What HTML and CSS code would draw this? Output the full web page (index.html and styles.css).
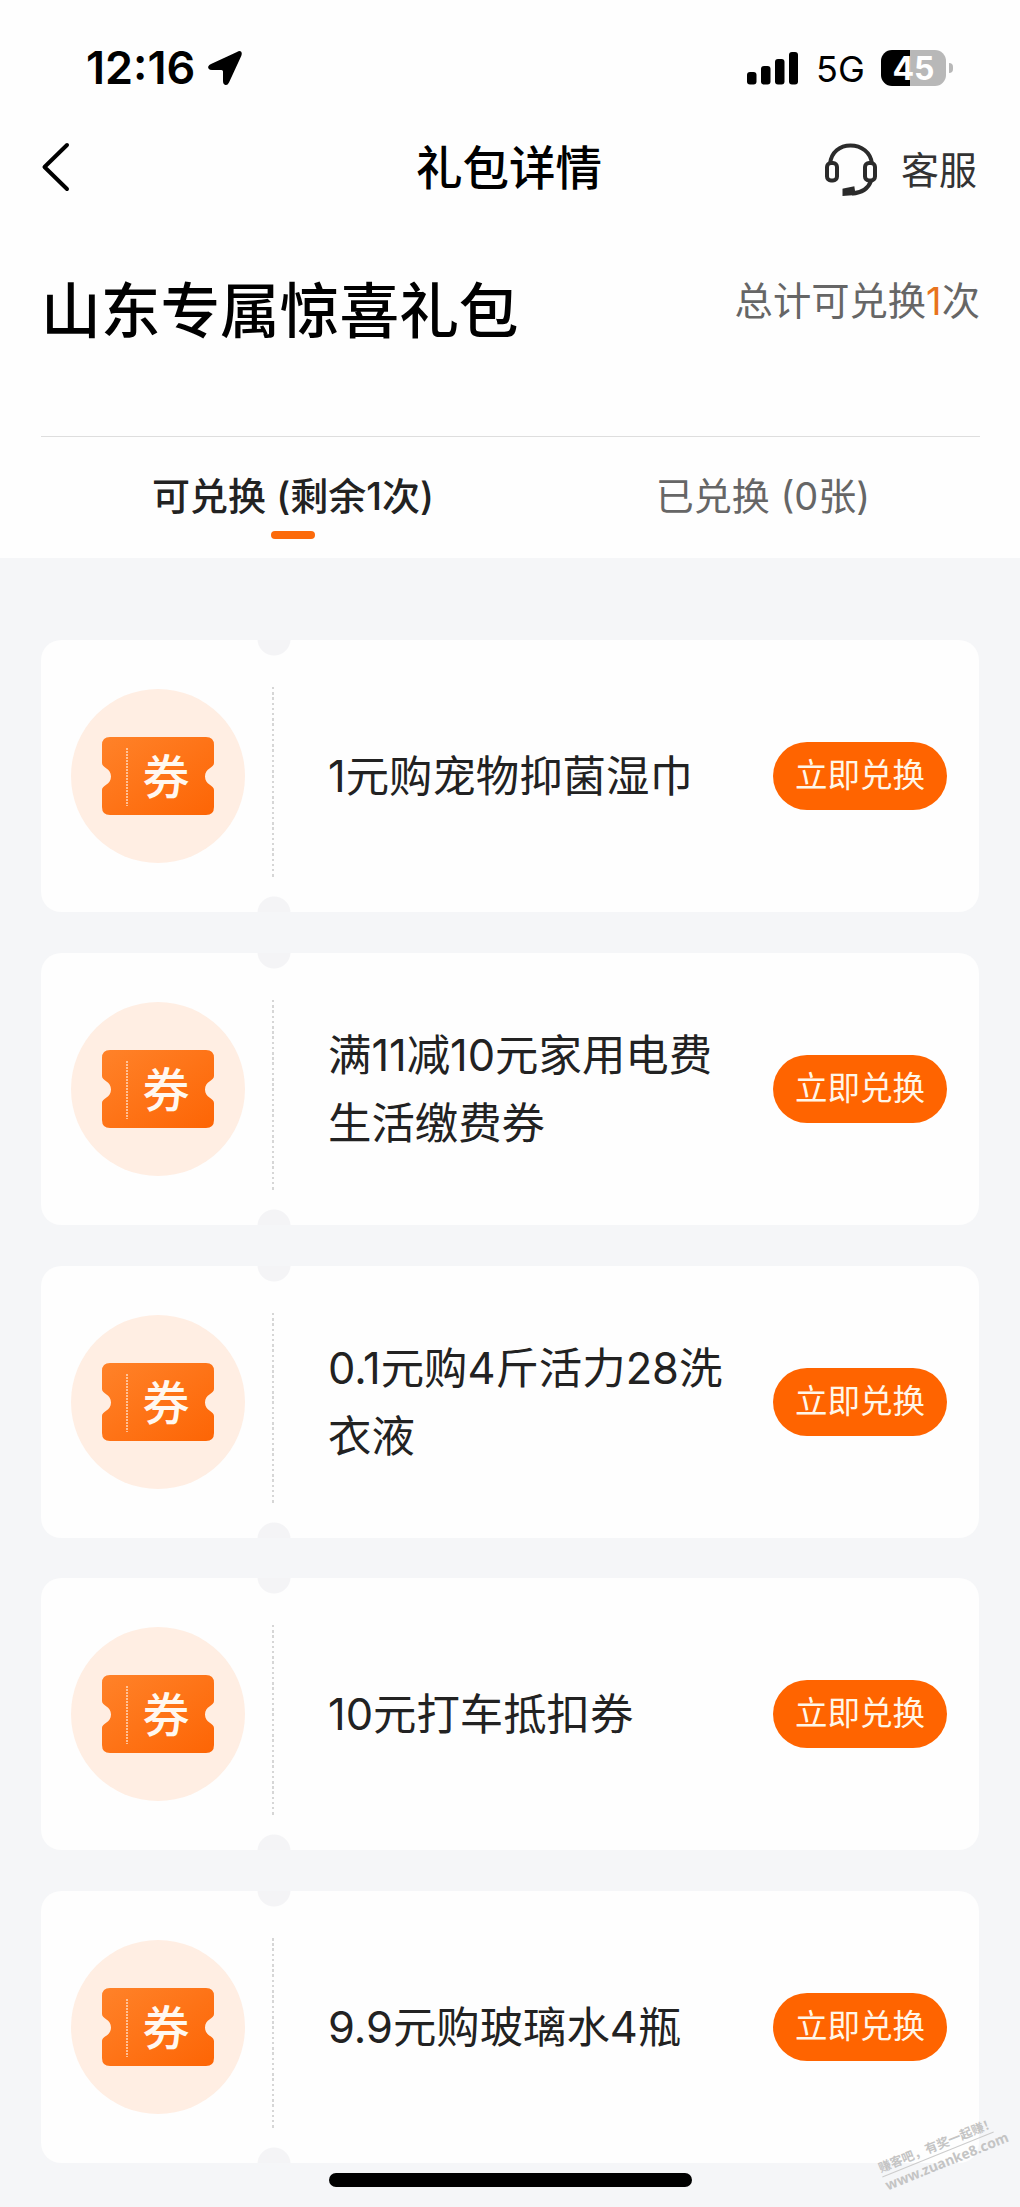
FILE: index.html
```html
<!DOCTYPE html>
<html lang="zh-CN">
<head>
<meta charset="utf-8">
<title>礼包详情</title>
<link rel="stylesheet" href="styles.css">
</head>
<body>
<svg class="defs" width="0" height="0" aria-hidden="true">
  <defs>
    <linearGradient id="ticket-fill" x1="0" y1="0" x2="1" y2="1">
      <stop offset="0" stop-color="#ff8229"/>
      <stop offset="1" stop-color="#fd6505"/>
    </linearGradient>
    <symbol id="coupon" viewBox="0 0 174 174">
      <circle cx="87" cy="87" r="87" fill="#ffeee3"/>
      <path d="M39 48H135Q143 48 143 56V74C143 79 134 79 134 87.500S143 96 143 101V118Q143 126 135 126H39Q31 126 31 118V101C31 96 40 96 40 87.500S31 79 31 74V56Q31 48 39 48Z" fill="url(#ticket-fill)"/>
      <path d="M56 59V117" stroke="#ffd9bd" stroke-width="1.500" stroke-dasharray="2 1"/>
      <text class="coupon-char" x="95" y="105" text-anchor="middle">券</text>
    </symbol>
  </defs>
</svg>

<header class="top">
  <div class="status">
    <div class="status-left">
      <span class="time">12:16</span>
      <svg width="36" height="36" viewBox="0 0 36 36"><path d="M30 2L4 14Q0 16 1.500 18.500Q2.500 20 5 20H14.500Q16 20 16 21.500V31Q16 34.500 18.500 35Q20.500 35.500 22 32.500L34 6.500Q35.500 3 34 1.500Q32.500 .5 30 2Z"/></svg>
    </div>
    <div class="status-right">
      <svg width="52" height="34" viewBox="0 0 52 34"><rect x="0" y="21" width="9.500" height="12.500" rx="3"/><rect x="14" y="15" width="9.500" height="18.500" rx="3"/><rect x="28" y="8" width="9.500" height="25.500" rx="3"/><rect x="42" y="1" width="9" height="32.500" rx="3"/></svg>
      <span class="network">5G</span>
      <div class="battery"><div class="battery-body">45</div><div class="battery-cap"></div></div>
    </div>
  </div>

  <nav class="nav">
    <svg class="back" width="30" height="52" viewBox="0 0 30 52"><path d="M26 4L3.500 26L26 48"/></svg>
    <h1 class="nav-title">礼包详情</h1>
    <div class="service">
      <svg width="52" height="54" viewBox="0 0 52 54"><path d="M5 21C6 9 15 2.500 25.500 2.500S46 9 47 21"/><rect x="2" y="20" width="10" height="17.500" rx="4"/><rect x="40" y="20" width="10" height="17.500" rx="4"/><path d="M46 38C43 46 36 50 27 50.500"/><path class="mic" d="M18.500 46.500L28.500 44.500L29.500 51L18.500 52Z"/></svg>
      <span>客服</span>
    </div>
  </nav>

  <section class="summary">
    <h2 class="summary-title">山东专属惊喜礼包</h2>
    <p class="summary-total">总计可兑换<em>1</em>次</p>
  </section>

  <div class="tabs">
    <div class="tab tab-active">可兑换 (剩余1次)</div>
    <div class="tab">已兑换 (0张)</div>
  </div>
</header>

<main class="list">
  <article class="card">
    <svg class="coupon"><use href="#coupon"/></svg>
    <div class="divider"></div>
    <p class="name">1元购宠物抑菌湿巾</p>
    <button class="redeem">立即兑换</button>
  </article>
  <article class="card">
    <svg class="coupon"><use href="#coupon"/></svg>
    <div class="divider"></div>
    <p class="name">满11减10元家用电费<br>生活缴费券</p>
    <button class="redeem">立即兑换</button>
  </article>
  <article class="card">
    <svg class="coupon"><use href="#coupon"/></svg>
    <div class="divider"></div>
    <p class="name">0.1元购4斤活力28洗<br>衣液</p>
    <button class="redeem">立即兑换</button>
  </article>
  <article class="card">
    <svg class="coupon"><use href="#coupon"/></svg>
    <div class="divider"></div>
    <p class="name">10元打车抵扣券</p>
    <button class="redeem">立即兑换</button>
  </article>
  <article class="card">
    <svg class="coupon"><use href="#coupon"/></svg>
    <div class="divider"></div>
    <p class="name">9.9元购玻璃水4瓶</p>
    <button class="redeem">立即兑换</button>
  </article>
</main>

<div class="home-bar"></div>
<div class="watermark">
  <div class="watermark-slogan">赚客吧，有奖一起赚！</div>
  <div class="watermark-site">www.zuanke8.com</div>
</div>
</body>
</html>
```
FILE: styles.css
```css
* { box-sizing: border-box; margin: 0; padding: 0; }

body {
  position: relative;
  width: 1020px;
  height: 2207px;
  overflow: hidden;
  background: #f5f6f8;
  color: #222;
  font-family: Inter, "Noto Sans CJK SC", sans-serif;
}

svg { display: block; flex: none; }
.defs { position: absolute; }

.top { height: 558px; background: #fefefe; }

/* Status bar */
.status {
  display: flex;
  justify-content: space-between;
  height: 136px;
  padding: 0 67px 0 86px;
  align-items: center;
  color: #000;
}
.status-left, .status-right { display: flex; align-items: center; }
.status-left { gap: 12px; }
.time { font-size: 45px; font-weight: 600; line-height: 52px; }
.network { margin-left: 17px; font-size: 36px; font-weight: 400; line-height: 44px; padding-top: 2px; width: 48px; }
.battery { display: flex; align-items: center; gap: 3px; margin-left: 17px; }
.battery-body {
  width: 65px;
  height: 36px;
  border-radius: 11px;
  background: linear-gradient(90deg, #000 29.500px, #b8b8b8 29.500px);
  color: #fff;
  font-size: 32px;
  font-weight: 700;
  line-height: 37px;
  text-align: center;
}
.battery-cap { width: 4px; height: 10px; border-radius: 0 5px 5px 0; background: #b8b8b8; }

/* Navigation */
.nav {
  display: grid;
  grid-template-columns: 1fr auto 1fr;
  align-items: center;
  height: 62px;
  padding: 0 43px 0 41px;
}
.back path { fill: none; stroke: #000; stroke-width: 4; stroke-linecap: round; stroke-linejoin: round; }
.nav-title { padding-top: 1px; font-size: 46.500px; font-weight: 500; line-height: 60px; color: #000; }
.service {
  display: flex;
  justify-content: flex-end;
  align-items: center;
  gap: 24px;
  padding-top: 5px;
  font-size: 38px;
  line-height: 50px;
  color: #333;
}
.service path, .service rect { fill: none; stroke: #2b2b2b; stroke-width: 4; }
.service .mic { fill: #2b2b2b; stroke-width: 2; }

/* Package summary */
.summary {
  display: flex;
  justify-content: space-between;
  align-items: flex-start;
  height: 239px;
  margin: 0 40px 0 41px;
  padding-top: 77px;
  border-bottom: 1px solid #dedede;
}
.summary-title { font-size: 59.700px; font-weight: 500; line-height: 72px; color: #000; }
.summary-total { font-size: 38.300px; line-height: 52px; color: #666; }
.summary-total em { font-style: normal; color: #e8731c; }

/* Tabs */
.tabs { display: grid; grid-template-columns: 1fr 1fr; padding: 0 22px 0 58px; }
.tab {
  display: flex;
  flex-direction: column;
  align-items: center;
  padding-top: 33px;
  font-size: 38px;
  line-height: 52px;
  color: #666;
}
.tab-active { font-weight: 500; color: #222; }
.tab-active::after {
  content: "";
  width: 44px;
  height: 8px;
  margin-top: 9px;
  border-radius: 4px;
  background: #fc6a0a;
}

/* Coupon cards */
.list { display: grid; gap: 40.750px; padding: 82px 41px 0; }
.card {
  display: flex;
  align-items: center;
  height: 272px;
  padding: 0 32px 0 30px;
  border-radius: 20px;
  background:
    radial-gradient(circle at 233px -1px, #f4f4f6 16px, transparent 17px),
    radial-gradient(circle at 233px 273px, #f4f4f6 16px, transparent 17px),
    #fefefe;
}
.coupon { width: 174px; height: 174px; }
.coupon-char { font-family: "Noto Sans CJK SC", sans-serif; font-size: 47px; font-weight: 500; fill: #fff8f0; }
.divider {
  flex: none;
  width: 2px;
  height: 191px;
  margin: 13px 0 0 27px;
  background: repeating-linear-gradient(180deg, #d6d6d6 0 2.500px, transparent 2.500px 5.200px);
}
.name { flex: 1; margin-left: 54px; font-size: 43.400px; line-height: 68px; white-space: nowrap; color: #222; }
.redeem {
  flex: none;
  width: 174px;
  height: 68px;
  border: 0;
  border-radius: 34px;
  background: #ff6400;
  color: #fff6e8;
  font: 400 32.500px/68px Inter, "Noto Sans CJK SC", sans-serif;
}

/* Overlays above the scrolling list */
.home-bar {
  position: absolute;
  left: 329px;
  bottom: 20px;
  width: 363px;
  height: 14px;
  border-radius: 7px;
  background: #000;
}
.watermark {
  position: absolute;
  left: 878px;
  top: 2136px;
  width: 120px;
  color: #c4c4c4;
  text-align: center;
  white-space: nowrap;
  transform: rotate(-22deg);
}
.watermark-slogan { border-bottom: 1px solid #cccccc; font: 700 12.500px/18px "Noto Sans CJK SC", sans-serif; }
.watermark-site { font: 700 14px/18px "Noto Sans", sans-serif; }
```
